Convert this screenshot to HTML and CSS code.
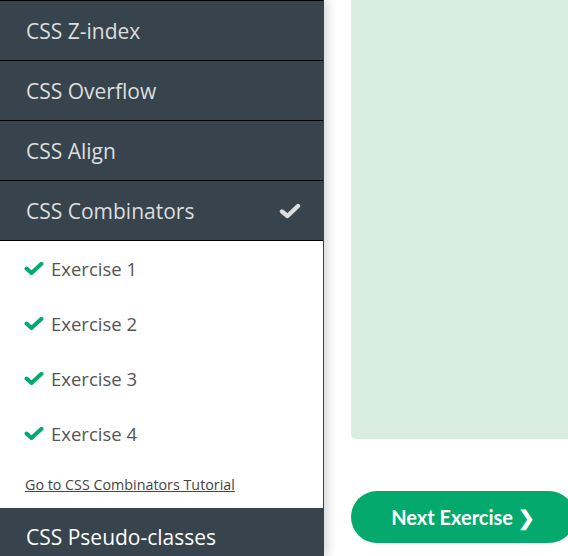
FILE: index.html
```html
<!DOCTYPE html>
<html>
<head>
<meta charset="utf-8">
<link rel="stylesheet" href="styles.css">
</head>
<body>
<div class="page">
  <nav class="sidebar">
    <div class="item">CSS Z-index</div>
    <div class="item">CSS Overflow</div>
    <div class="item">CSS Align</div>
    <div class="item active">CSS Combinators
      <svg class="hcheck" width="22" height="16" viewBox="0 0 22 16"><polyline points="3,8.5 8.5,13 19,3" fill="none" stroke="#dddddd" stroke-width="4.4" stroke-linecap="round" stroke-linejoin="round"/></svg>
    </div>
    <div class="submenu">
      <div class="ex"><svg class="gcheck" width="20" height="15" viewBox="0 0 20 15"><polyline points="2.5,7.5 7.5,12 17.5,2.8" fill="none" stroke="#04aa6d" stroke-width="4" stroke-linecap="round" stroke-linejoin="round"/></svg>Exercise 1</div>
      <div class="ex"><svg class="gcheck" width="20" height="15" viewBox="0 0 20 15"><polyline points="2.5,7.5 7.5,12 17.5,2.8" fill="none" stroke="#04aa6d" stroke-width="4" stroke-linecap="round" stroke-linejoin="round"/></svg>Exercise 2</div>
      <div class="ex"><svg class="gcheck" width="20" height="15" viewBox="0 0 20 15"><polyline points="2.5,7.5 7.5,12 17.5,2.8" fill="none" stroke="#04aa6d" stroke-width="4" stroke-linecap="round" stroke-linejoin="round"/></svg>Exercise 3</div>
      <div class="ex"><svg class="gcheck" width="20" height="15" viewBox="0 0 20 15"><polyline points="2.5,7.5 7.5,12 17.5,2.8" fill="none" stroke="#04aa6d" stroke-width="4" stroke-linecap="round" stroke-linejoin="round"/></svg>Exercise 4</div>
      <a class="tut" href="#">Go to CSS Combinators Tutorial</a>
    </div>
    <div class="item last">CSS Pseudo-classes</div>
  </nav>
  <main class="main">
    <div class="greenbox"></div>
    <button class="next">Next Exercise ❯</button>
  </main>
</div>
</body>
</html>
```
FILE: styles.css
```css
html, body {
  margin: 0;
  padding: 0;
  background: #ffffff;
  overflow: hidden;
}
.page {
  display: flex;
  width: 568px;
  height: 556px;
  overflow: hidden;
}
.sidebar {
  width: 323px;
  flex: none;
  background: #38444d;
  border-right: 1px solid #38444d;
  box-shadow: 3px 0 10px rgba(0,0,0,0.18);
  font-family: "Open Sans", "Noto Sans", sans-serif;
  position: relative;
  z-index: 1;
  border-top: 1px solid #000;
}
.item {
  height: 60px;
  border-bottom: 1px solid #000;
  color: #dddddd;
  font-size: 21px;
  padding-left: 26px;
  padding-right: 22px;
  display: flex;
  align-items: center;
  justify-content: space-between;
  box-sizing: border-box;
}
.item.last {
  border-bottom: none;
  color: #ffffff;
  padding-bottom: 3px;
}
.hcheck {
  display: block;
}
.submenu {
  background: #ffffff;
  height: 267px;
  box-sizing: border-box;
}
.ex {
  height: 55px;
  display: flex;
  align-items: center;
  padding-left: 24px;
  font-size: 18.5px;
  color: #555555;
}
.gcheck {
  margin-right: 7px;
  display: block;
}
.tut {
  display: block;
  margin-left: 25px;
  margin-top: 14px;
  font-size: 14.3px;
  color: #444444;
  text-decoration: underline;
}
.main {
  flex: 1;
  padding-left: 27px;
  display: flex;
  flex-direction: column;
  min-width: 0;
}
.greenbox {
  height: 439px;
  width: 260px;
  flex: none;
  background: #d9eee1;
  border-radius: 0 0 5px 5px;
}
.next {
  margin-top: 52px;
  width: 224px;
  height: 52px;
  flex: none;
  border: none;
  border-radius: 26px;
  background: #04aa6d;
  color: #ffffff;
  font-family: "Lato", "Open Sans", sans-serif;
  font-weight: 700;
  font-size: 20px;
  padding: 0;
  text-align: center;
}
```
